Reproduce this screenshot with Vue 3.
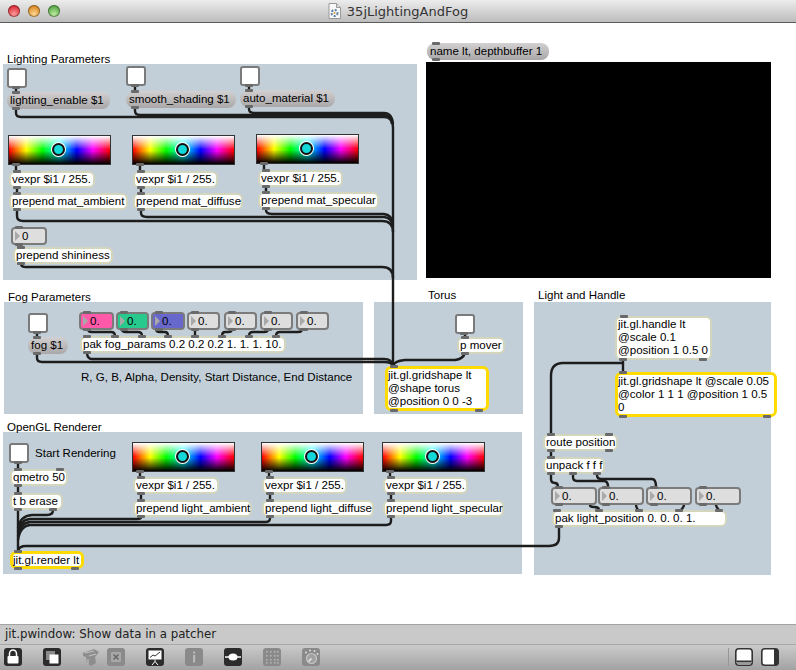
<template>
  <div class="window">
    <div class="titlebar">
      <div class="lights">
        <span class="light red"></span>
        <span class="light amber"></span>
        <span class="light green"></span>
      </div>
      <div class="title">
        <svg width="13" height="16" viewBox="0 0 13 16">
          <path d="M1 .5h7.500l4 4v11h-11.500z" fill="#f8f8f8" stroke="#999" />
          <path d="M8.500.5v4h4" fill="#ddd" stroke="#999" />
          <circle cx="6.500" cy="10" r="3" fill="none" stroke="#5a80a8" stroke-width="2" stroke-dasharray="2 1.500" />
          <circle cx="6.500" cy="10" r="1" fill="#d89a3a" />
        </svg>
        <span>35jLightingAndFog</span>
      </div>
    </div>

    <div class="canvas">
      <div v-for="p in panels" :key="p.label" class="panel" :style="box(p)"></div>
      <div class="screen" :style="box({ x: 426, y: 62, w: 345, h: 216 })"></div>
      <div v-for="l in labels" :key="l.text" class="label" :style="{ left: l.x + 'px', top: l.y - top + 'px' }">{{ l.text }}</div>

      <svg class="wires" width="796" height="601" viewBox="0 23 796 601">
        <path v-for="(d, i) in wires" :key="i" :d="d" />
      </svg>

      <div v-for="(n, i) in nodes" :key="i" class="node" :class="n.type" :style="box(n)">
        <span v-if="n.type === 'swatch'" class="knob"></span>
        <template v-else-if="n.type === 'num'">
          <span class="arrow"></span>
          <span>{{ n.text }}</span>
        </template>
        <template v-else>{{ n.text }}</template>
      </div>

      <span v-for="(p, i) in ports" :key="'p' + i" class="port" :style="{ left: p.x + 'px', top: p.y - top + 'px' }"></span>
    </div>

    <div class="hint">jit.pwindow: Show data in a patcher</div>

    <div class="toolbar">
      <svg class="tool" viewBox="0 0 18 18">
        <rect width="18" height="18" rx="3" fill="#2c2c2c" />
        <path d="M5.500 8V5.500a3.500 3.500 0 0 1 7 0V8" fill="none" stroke="#fff" stroke-width="1.500" />
        <rect x="3.500" y="8" width="11" height="7.500" rx="1" fill="#fff" />
      </svg>
      <svg class="tool" viewBox="0 0 18 18">
        <rect width="18" height="18" rx="3" fill="#2c2c2c" />
        <rect x="3" y="3" width="9" height="9" fill="#8a8a8a" />
        <rect x="6.500" y="6.500" width="9" height="9" fill="#fff" />
      </svg>
      <div class="pair">
        <svg class="tool" viewBox="0 0 18 18">
          <path d="M1 5l11-4 5 3-4 5 1 6-5 3-4-3-1-6-3-1z" fill="#8d8d8d" />
          <path d="M3 5l9-2M7 8l7-2M6 11v5" stroke="#c4c4c4" stroke-width="1" fill="none" />
        </svg>
        <svg class="tool" viewBox="0 0 18 18">
          <rect width="18" height="18" rx="3" fill="#8a8a8a" />
          <rect x="4" y="4" width="10" height="10" rx="1" fill="#a8a8a8" />
          <path d="M6.500 6.500l5 5M11.500 6.500l-5 5" stroke="#666" stroke-width="1.500" />
        </svg>
      </div>
      <svg class="tool" viewBox="0 0 18 18">
        <rect width="18" height="18" rx="3" fill="#2c2c2c" />
        <rect x="2.500" y="2.500" width="13" height="9" fill="#fff" />
        <path d="M4 9.500l3-2.500 2 1 5-4" fill="none" stroke="#333" stroke-width="1" />
        <path d="M9 11.500v2M9 13.500l-3 3.500M9 13.500l3 3.500" stroke="#fff" stroke-width="1" />
      </svg>
      <svg class="tool" viewBox="0 0 18 18">
        <rect width="18" height="18" rx="3" fill="#8a8a8a" />
        <rect x="8" y="3.500" width="2.200" height="2.200" fill="#b8b8b8" />
        <rect x="8" y="7" width="2.200" height="7.500" fill="#b8b8b8" />
      </svg>
      <svg class="tool" viewBox="0 0 18 18">
        <rect width="18" height="18" rx="3" fill="#2c2c2c" />
        <path d="M1 9h16" stroke="#fff" stroke-width="1.500" />
        <ellipse cx="9" cy="9" rx="4.500" ry="3.500" fill="#fff" />
      </svg>
      <svg class="tool" viewBox="0 0 18 18">
        <rect width="18" height="18" rx="3" fill="#8a8a8a" />
        <g fill="#b4b4b4">
          <rect v-for="c in gridDots" :key="c[0] + '-' + c[1]" :x="c[0]" :y="c[1]" width="1.600" height="1.600" />
        </g>
      </svg>
      <svg class="tool" viewBox="0 0 18 18">
        <rect width="18" height="18" rx="3" fill="#8a8a8a" />
        <circle cx="9.500" cy="10.500" r="5" fill="#a2a2a2" stroke="#c4c4c4" stroke-width="1.200" />
        <path d="M9.500 10.500l-3 3" stroke="#eee" stroke-width="1.200" />
        <circle cx="4" cy="4.500" r="1" fill="#ddd" />
        <circle cx="8" cy="2.500" r="1" fill="#ddd" />
        <circle cx="12.500" cy="3" r="1" fill="#ddd" />
        <circle cx="15.500" cy="6" r="1" fill="#ddd" />
      </svg>

      <div class="views">
        <svg class="view" viewBox="0 0 18 18">
          <rect x=".8" y=".8" width="16.400" height="16.400" rx="3" fill="#fff" stroke="#333" stroke-width="1.600" />
          <path d="M1.500 12.500h15V14h-15z" fill="#333" />
          <path d="M1.600 14h14.800v1a1.500 1.500 0 0 1-1.500 1.500H3A1.500 1.500 0 0 1 1.600 15z" fill="#999" />
        </svg>
        <svg class="view" viewBox="0 0 18 18">
          <rect x=".8" y=".8" width="16.400" height="16.400" rx="3" fill="#fff" stroke="#333" stroke-width="1.600" />
          <path d="M13 1h2a2.500 2.500 0 0 1 2.500 2.500v11A2.500 2.500 0 0 1 15 17h-2z" fill="#333" />
        </svg>
      </div>
    </div>
  </div>
</template>

<script setup>
const top = 23

const panels = [
  { label: 'lighting', x: 3, y: 64, w: 414, h: 216 },
  { label: 'fog', x: 4, y: 302, w: 359, h: 112 },
  { label: 'torus', x: 374, y: 302, w: 149, h: 112 },
  { label: 'light', x: 534, y: 302, w: 237, h: 273 },
  { label: 'renderer', x: 3, y: 432, w: 519, h: 142 },
]

const labels = [
  { text: 'Lighting Parameters', x: 7, y: 52 },
  { text: 'Fog Parameters', x: 8, y: 290 },
  { text: 'Torus', x: 428, y: 288 },
  { text: 'Light and Handle', x: 538, y: 288 },
  { text: 'OpenGL Renderer', x: 7, y: 420 },
  { text: 'R, G, B, Alpha, Density, Start Distance, End Distance', x: 81, y: 370 },
  { text: 'Start Rendering', x: 35, y: 446 },
]

const toggle = (x, y) => ({ type: 'toggle', x, y, w: 20, h: 20, outs: [x + 5] })
const swatch = (x, y) => ({ type: 'swatch', x, y, w: 103, h: 30, outs: [x + 4] })
const msg = (text, x, y, w) => ({ type: 'msg', text, x, y, w, h: 17, ins: [x + 5], outs: [x + 5] })
const obj = (text, x, y, w, h = 17, extra = {}) => ({ type: 'obj', text, x, y, w, h, ins: [x + 4], outs: [x + 4], ...extra })
const num = (text, x, y, w, fill) => ({ type: 'num', text, x, y, w, h: 18, fill, ins: [x + 4], outs: [x + 4] })

const nodes = [
  toggle(7, 68), toggle(126, 66), toggle(240, 66),
  msg('lighting_enable $1', 7, 92, 103),
  msg('smooth_shading $1', 126, 91, 110),
  msg('auto_material $1', 240, 90, 95),
  swatch(8, 135), swatch(132, 135), swatch(256, 134),
  obj('vexpr $i1 / 255.', 9, 171, 86),
  obj('vexpr $i1 / 255.', 133, 171, 85),
  obj('vexpr $i1 / 255.', 258, 170, 85),
  obj('prepend mat_ambient', 9, 193, 119),
  obj('prepend mat_diffuse', 133, 193, 110),
  obj('prepend mat_specular', 258, 192, 121),
  num('0', 11, 227, 36),
  obj('prepend shininess', 13, 247, 100),

  { type: 'msg', text: 'name lt, depthbuffer 1', x: 427, y: 43, w: 122, h: 17, ins: [432], outs: [432] },

  toggle(28, 313),
  msg('fog $1', 28, 337, 40),
  num('0.', 79, 312, 35, '#ff5aa9'),
  num('0.', 116, 312, 33, '#27c98c'),
  num('0.', 151, 312, 34, '#6868cc'),
  num('0.', 187, 312, 33),
  num('0.', 224, 312, 33),
  num('0.', 260, 312, 33),
  num('0.', 296, 312, 33),
  obj('pak fog_params 0.2 0.2 0.2 1. 1. 1. 10.', 80, 336, 206, 17, { ins: [83, 111, 138, 164, 191, 218, 245, 272], outs: [83] }),
  toggle(455, 314),
  obj('p mover', 457, 337, 48, 17, { ins: [461], outs: [461] }),
  { type: 'obj active', text: 'jit.gl.gridshape lt\n@shape torus\n@position 0 0 -3', x: 385, y: 366, w: 104, h: 45, ins: [390], outs: [390, 475] },

  toggle(9, 443),
  swatch(132, 442), swatch(261, 442), swatch(382, 442),
  obj('qmetro 50', 10, 469, 58, 17, { ins: [14, 56], outs: [14] }),
  obj('t b erase', 10, 493, 53, 17, { ins: [14], outs: [14, 49] }),
  obj('vexpr $i1 / 255.', 133, 477, 86),
  obj('vexpr $i1 / 255.', 262, 477, 85),
  obj('vexpr $i1 / 255.', 383, 477, 85),
  obj('prepend light_ambient', 133, 500, 119),
  obj('prepend light_diffuse', 262, 500, 112),
  obj('prepend light_specular', 383, 500, 121),
  { type: 'obj active', text: 'jit.gl.render lt', x: 10, y: 551, w: 74, h: 18, ins: [14], outs: [14, 71] },

  { type: 'obj', text: 'jit.gl.handle lt\n@scale 0.1\n@position 1 0.5 0', x: 615, y: 316, w: 97, h: 44, ins: [620], outs: [619, 699] },
  { type: 'obj active', text: 'jit.gl.gridshape lt @scale 0.05\n@color 1 1 1 @position 1 0.5\n0', x: 615, y: 372, w: 162, h: 45, ins: [619], outs: [619, 763] },
  obj('route position', 543, 434, 75, 17, { ins: [547, 605], outs: [547, 605] }),
  obj('unpack f f f', 543, 457, 62, 17, { ins: [547], outs: [547, 569, 593] }),
  num('0.', 551, 487, 46),
  num('0.', 598, 487, 46),
  num('0.', 646, 487, 46),
  num('0.', 695, 487, 46),
  obj('pak light_position 0. 0. 0. 1.', 552, 510, 175, 17, { ins: [553, 595, 635, 675, 715], outs: [555] }),
]

// inlet and outlet tabs sit over the top and bottom edge of a box
const ports = nodes.flatMap((n) => [
  ...(n.ins || []).map((x) => ({ x, y: n.y - 1 })),
  ...(n.outs || []).map((x) => ({ x, y: n.y + n.h - 2 })),
])

const wires = [
  // lighting parameters, everything runs into the torus
  'M16 109V113Q16 117 21 117H384Q393 117 393 128V366',
  'M135 108V111Q135 115 140 115H384Q391 115 392 124',
  'M249 107V109Q249 113 254 113H384Q392 113 393 124',
  'M16 88V92', 'M135 86V91', 'M249 86V90',
  'M16 165V171', 'M140 165V171', 'M264 164V170',
  'M17 188V193', 'M141 188V193', 'M266 187V192',
  'M17 210V216Q17 221 23 221H382Q393 221 393 232',
  'M141 210V213Q141 217 147 217H384Q392 218 393 226',
  'M266 209V210Q266 214 272 214H384Q392 215 393 224',
  'M19 238V247',
  'M21 264Q21 267 26 267H382Q393 267 393 278',
  // fog
  'M37 333V337',
  'M37 354V358Q37 362 42 362H384Q392 362 393 366',
  'M87 352Q87 359 92 359H384Q392 359 393 366',
  'M88 329Q88 332 92 332H111Q115 332 115 336',
  'M122 329Q122 332 126 332H138Q142 332 142 336',
  'M156 329Q156 332 160 332H165Q168 332 168 336',
  'M195 329V336',
  'M232 329Q232 332 228 332H225Q222 332 222 336',
  'M268 329Q268 332 264 332H253Q249 332 249 336',
  'M302 329Q302 332 298 332H280Q276 332 276 336',
  'M465 335V337',
  'M465 353Q463 359 455 360H405Q394 361 393 366',
  // renderer
  'M18 463V469', 'M18 486V493',
  'M18 510V551',
  'M53 510Q53 515 47 515H32Q20 516 18 528',
  'M141 517Q141 519 137 519H30Q20 520 18 532',
  'M270 517V518Q270 522 266 522H30Q20 523 18 536',
  'M391 517V521Q391 525 386 525H30Q20 526 18 540',
  'M140 472V477', 'M269 472V477', 'M390 472V477',
  'M141 494V500', 'M270 494V500', 'M391 494V500',
  'M559 527V538Q559 546 549 546H26Q19 546 18 551',
  // light and handle
  'M623 360V372',
  'M623 363H563Q551 363 551 376V434',
  'M551 451V457',
  'M551 474V479Q551 483 555 483Q558 483 558 487',
  'M573 474V477Q573 481 577 481H604Q608 481 608 487',
  'M597 474V475Q597 479 601 479H652Q656 479 656 487',
  'M590 505Q590 507 594 507Q599 507 599 510',
  'M636 505Q636 507 638 510',
  'M684 505Q684 507 681 510',
  'M716 505Q716 507 719 510',
]

const gridDots = [3, 7, 11, 14].flatMap((x) => [3, 7, 11, 14].map((y) => [x, y]))

const box = (n) => ({
  left: n.x + 'px',
  top: n.y - top + 'px',
  width: n.w + 'px',
  height: n.h + 'px',
  ...(n.fill ? { background: n.fill } : {}),
})
</script>

<style>
html, body {
  margin: 0;
  background: #fff;
}
</style>

<style scoped>
.window {
  width: 796px;
  height: 670px;
  display: flex;
  flex-direction: column;
  overflow: hidden;
  font-family: "Liberation Sans", Arial, sans-serif;
  color: #000;
}

.titlebar {
  height: 22px;
  flex: none;
  display: grid;
  grid-template-columns: 1fr auto 1fr;
  align-items: center;
  background: linear-gradient(#ececec, #bdbdbd);
  border-bottom: 1px solid #5c5c5c;
}

.lights {
  display: flex;
  gap: 8px;
  padding-left: 8px;
}

.light {
  width: 12px;
  height: 12px;
  border-radius: 50%;
  box-shadow: inset 0 0 0 1px rgba(0, 0, 0, .35);
}
.red { background: radial-gradient(circle at 50% 75%, #ff9a9a, #d8303c 70%); }
.amber { background: radial-gradient(circle at 50% 75%, #ffd890, #d88a28 70%); }
.green { background: radial-gradient(circle at 50% 75%, #bdeba0, #58a848 70%); }

.title {
  display: flex;
  align-items: center;
  gap: 6px;
  font-family: "DejaVu Sans", sans-serif;
  font-size: 13px;
  color: #333;
}

.canvas {
  position: relative;
  flex: 1;
  background: #fff;
}

.panel { position: absolute; background: #c2cfd8; }
.screen { position: absolute; background: #000; }

.label {
  position: absolute;
  font-size: 11.550px;
  line-height: 14px;
  white-space: nowrap;
}

.wires {
  position: absolute;
  left: 0;
  top: 0;
}
.wires path {
  fill: none;
  stroke: #1d1d1d;
  stroke-width: 2.400;
}

.node {
  position: absolute;
  box-sizing: border-box;
  font-size: 11.550px;
  line-height: 13px;
  white-space: pre;
}

.toggle {
  background: #fff;
  border: 2.500px solid #7a7a7a;
  border-radius: 3px;
}

.swatch {
  border: 1px solid #333;
  background:
    linear-gradient(to bottom, #fff 0, rgba(255, 255, 255, 0) 48%, rgba(0, 0, 0, 0) 52%, #000 100%),
    linear-gradient(to right, #f00, #ff0 17%, #0f0 33%, #0ff 50%, #00f 67%, #f0f 83%, #f00);
}
.knob {
  position: absolute;
  left: 43px;
  top: 7px;
  width: 9px;
  height: 9px;
  box-sizing: content-box;
  border-radius: 50%;
  background: #12d8d8;
  border: 2px solid #111;
  box-shadow: 0 0 0 1px #fff;
}

.msg {
  padding: 2px 3px;
  border-radius: 8px;
  background: linear-gradient(#d2d0d0, #a9a7a7);
}

.obj {
  padding: 0 1px;
  background: #fff;
  border: 2px solid #d3d6bc;
  border-radius: 6px;
}
.obj.active {
  border: 3px solid #ffdb00;
  padding: 0;
  border-radius: 6px;
}

.num {
  display: flex;
  align-items: center;
  background: #dedede;
  border: 2px solid #7b7b7b;
  border-radius: 4px;
  padding-left: 2px;
}
.arrow {
  width: 0;
  height: 0;
  border-left: 5px solid #a8a8a8;
  border-top: 5px solid transparent;
  border-bottom: 5px solid transparent;
  margin-right: 2px;
}

.port {
  position: absolute;
  width: 8px;
  height: 3px;
  background: #6a6a6a;
  border-radius: 1px;
}

.hint {
  height: 19px;
  flex: none;
  padding-left: 5px;
  background: #c9c9c9;
  border-top: 1px solid #a3a3a3;
  border-bottom: 1px solid #a8a8a8;
  font-family: "DejaVu Sans", sans-serif;
  font-size: 11.800px;
  line-height: 19px;
  color: #222;
}

.toolbar {
  height: 25px;
  flex: none;
  box-sizing: border-box;
  display: flex;
  align-items: center;
  gap: 21px;
  padding: 0 17px 2px 4px;
  background: linear-gradient(#cbcbcb, #a2a2a2);
}

.tool {
  width: 18px;
  height: 18px;
  display: block;
}

.pair {
  display: flex;
  gap: 7px;
}

.views {
  margin-left: auto;
  display: flex;
  gap: 8px;
  padding-left: 6px;
  border-left: 1px solid #979797;
}

.view {
  width: 18px;
  height: 18px;
  display: block;
}
</style>
